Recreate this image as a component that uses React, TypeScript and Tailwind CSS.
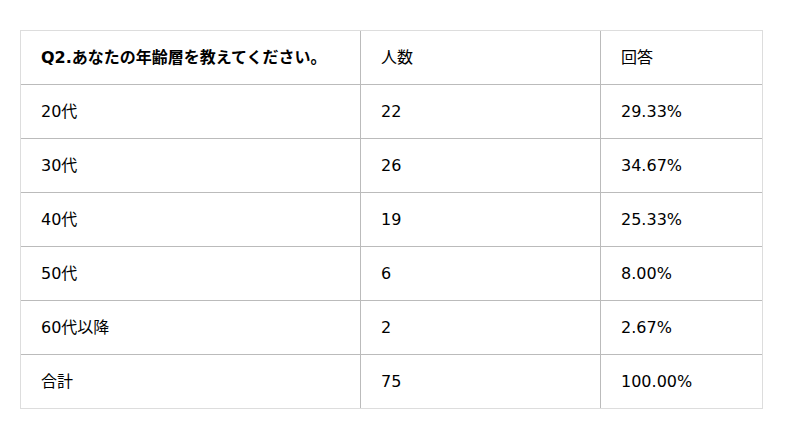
const rows = [
	["20代", "22", "29.33%"],
	["30代", "26", "34.67%"],
	["40代", "19", "25.33%"],
	["50代", "6", "8.00%"],
	["60代以降", "2", "2.67%"],
	["合計", "75", "100.00%"],
];

function Row({ cells, bold, first }: { cells: string[]; bold?: boolean; first?: boolean }) {
	return (
		<div
			className={`grid grid-cols-[339px_1px_239px_1px_161px] ${first ? "h-[53px]" : "h-[54px] border-t border-[#bbb]"}`}
		>
			<div className={`flex items-center pl-[20px] pt-px ${bold ? "font-bold" : ""}`}>{cells[0]}</div>
			<div className="bg-[#bbb]" />
			<div className="flex items-center pl-[20px] pt-px">{cells[1]}</div>
			<div className="bg-[#bbb]" />
			<div className="flex items-center pl-[20px] pt-px">{cells[2]}</div>
		</div>
	);
}

export default function App() {
	return (
		<div className="w-[800px] h-[439px] bg-white pt-[30px] pl-[20px] text-[16px] text-black font-[DejaVu_Sans,Noto_Sans_CJK_JP,sans-serif]">
			<div className="w-[743px] border border-[#ddd]">
				<Row cells={["Q2.あなたの年齢層を教えてください。", "人数", "回答"]} bold first />
				{rows.map((r) => (
					<Row key={r[0]} cells={r} />
				))}
			</div>
		</div>
	);
}
